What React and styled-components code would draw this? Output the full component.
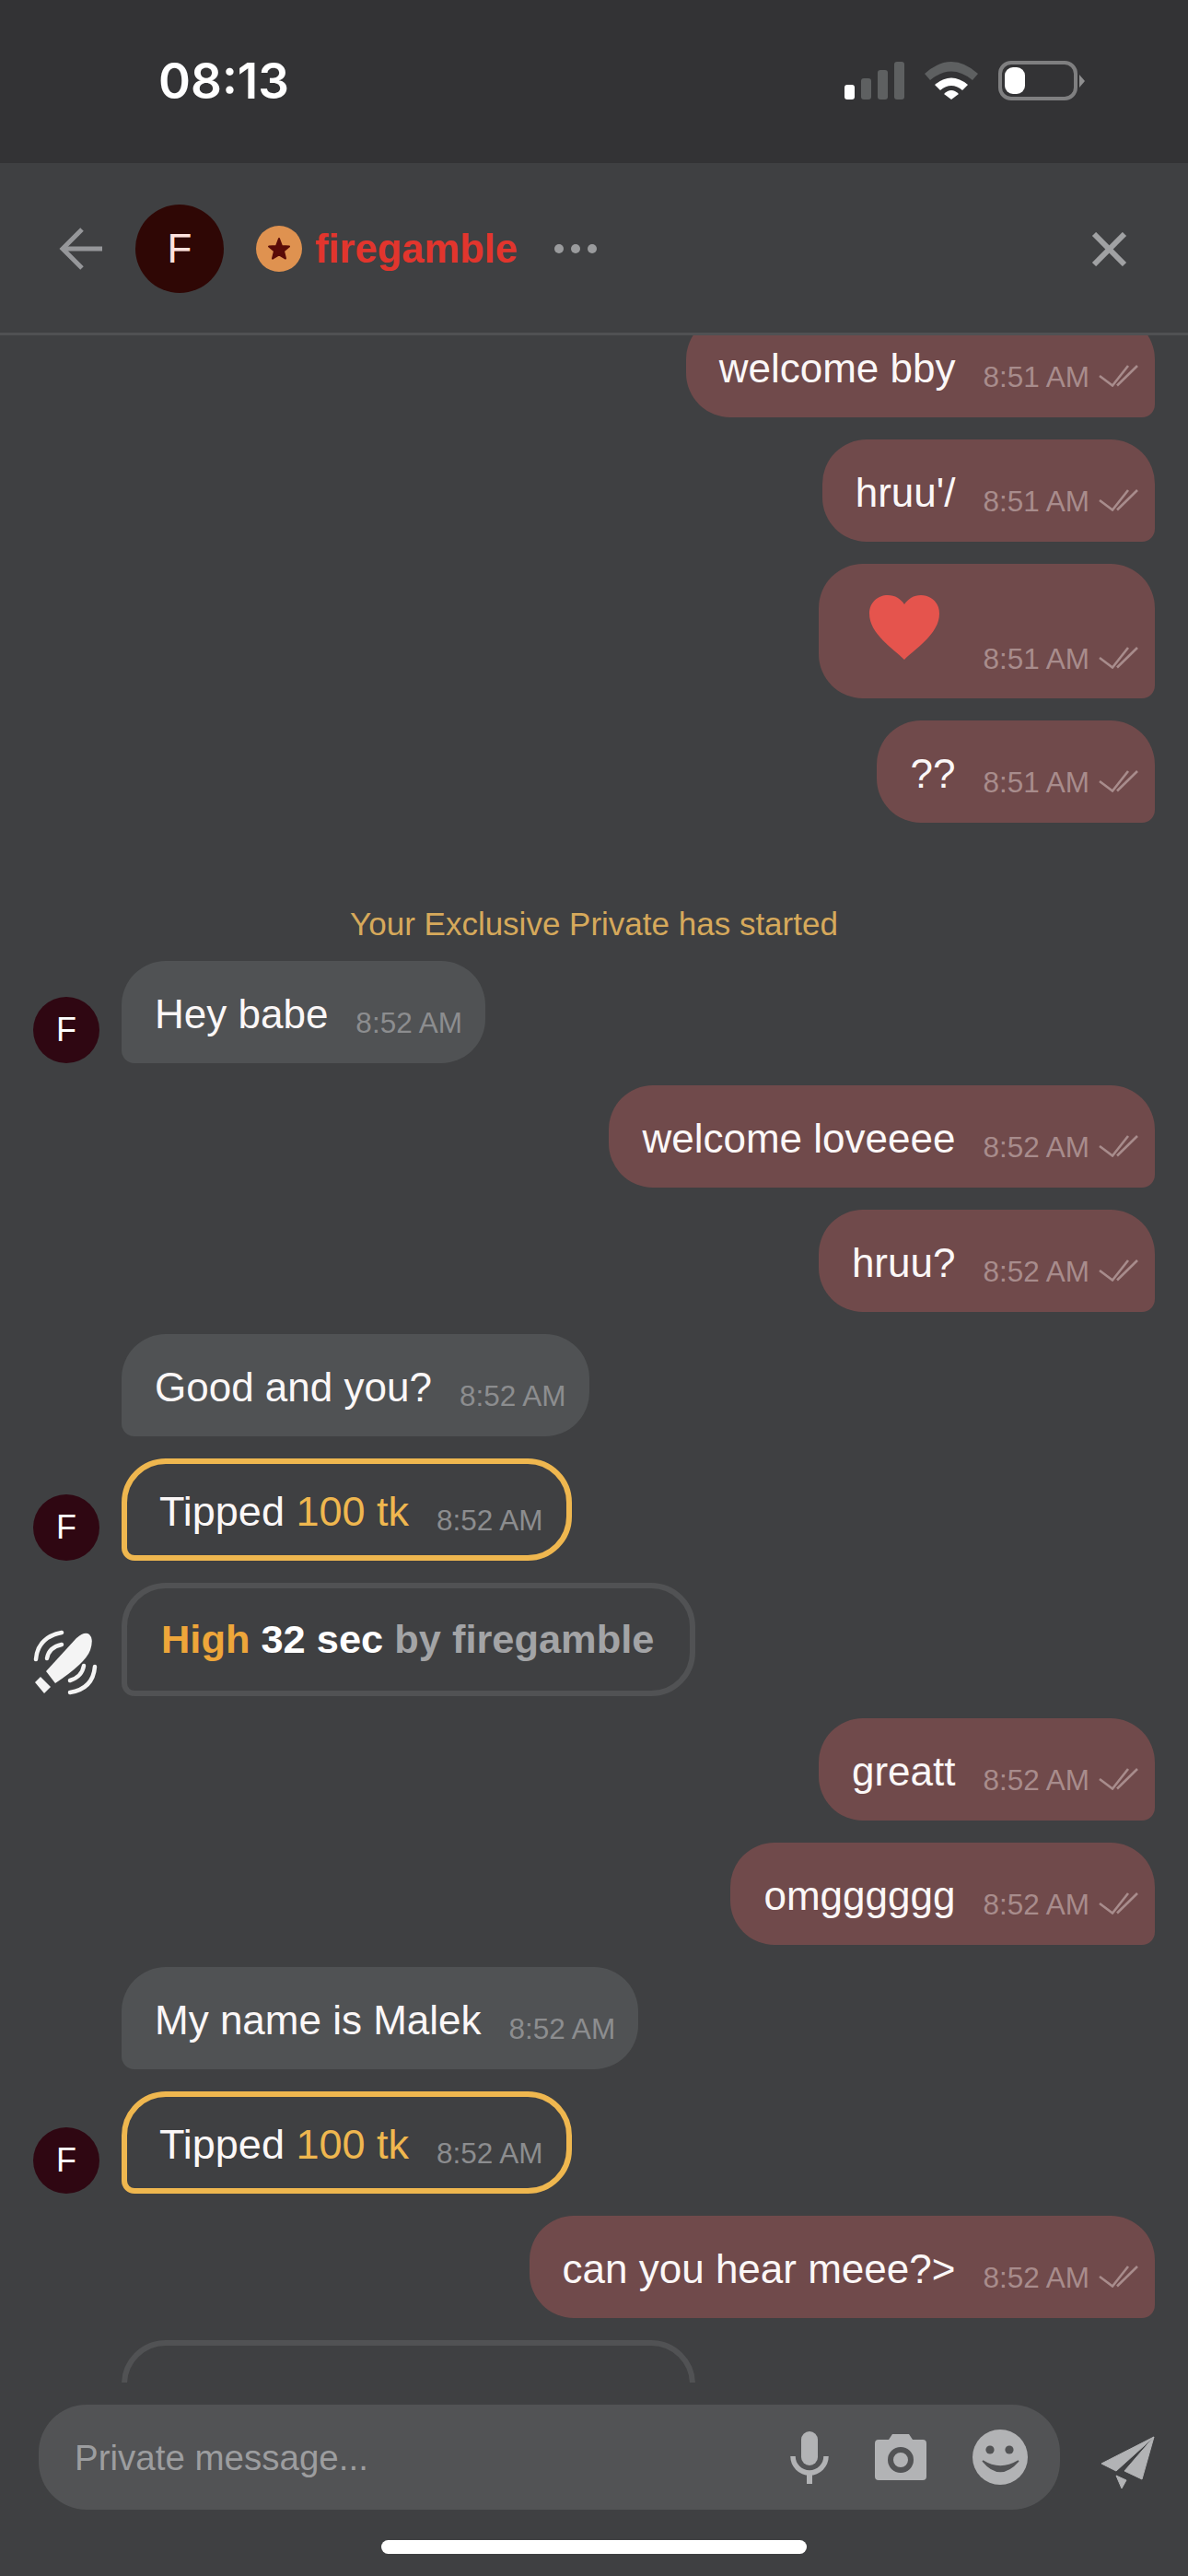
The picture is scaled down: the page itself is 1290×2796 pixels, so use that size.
import styled, { createGlobalStyle } from "styled-components";

const GlobalStyle = createGlobalStyle`
  html, body {
    margin: 0;
    padding: 0;
    background: #3f4042;
  }
  * {
    box-sizing: border-box;
  }
`;

const Page = styled.div`
  width: 1290px;
  height: 2796px;
  display: flex;
  flex-direction: column;
  overflow: hidden;
  background: #3f4042;
  color: #fff;
  font-family: "Liberation Sans", Arial, sans-serif;
`;

const StatusBar = styled.div`
  height: 177px;
  flex: none;
  display: flex;
  align-items: center;
  justify-content: space-between;
  padding: 0 112px 2px 172px;
  background: #333335;
`;
const Clock = styled.div`
  font-family: Inter, sans-serif;
  font-size: 53px;
  font-weight: 600;
`;
const StatusIcons = styled.div`
  display: flex;
  align-items: center;
  gap: 22px;
`;
const Signal = styled.div`
  display: flex;
  align-items: flex-end;
  gap: 7px;
  height: 41px;
`;
const SignalBar = styled.span`
  width: 11px;
  height: ${(p) => p.$h}px;
  border-radius: 3px;
  background: ${(p) => (p.$on ? "#fff" : "#5e6061")};
`;
const Battery = styled.div`
  display: flex;
  align-items: center;
  gap: 2px;
`;
const BatteryShell = styled.div`
  width: 86px;
  height: 43px;
  padding: 3px;
  border: 4px solid #7f7f80;
  border-radius: 14px;
`;
const BatteryFill = styled.div`
  width: 22px;
  height: 100%;
  border-radius: 9px;
  background: #fff;
`;
const BatteryNub = styled.div`
  width: 0;
  height: 0;
  border-top: 7px solid transparent;
  border-bottom: 7px solid transparent;
  border-left: 6px solid #8f8f90;
`;

const Header = styled.div`
  height: 187px;
  flex: none;
  display: flex;
  align-items: center;
  padding: 2px 66px 0 64px;
  border-bottom: 3px solid #505153;
`;
const BackIcon = styled.svg`
  width: 47px;
  height: 46px;
  margin-right: 36px;
`;
const Avatar = styled.div`
  width: ${(p) => p.$size}px;
  height: ${(p) => p.$size}px;
  flex: none;
  display: flex;
  align-items: center;
  justify-content: center;
  border-radius: 50%;
  background: ${(p) => p.$bg};
  color: ${(p) => p.$fg};
  font-size: ${(p) => p.$font}px;
`;
const Badge = styled.div`
  width: 50px;
  height: 50px;
  margin: 0 14px 0 35px;
  display: flex;
  align-items: center;
  justify-content: center;
  border-radius: 50%;
  background: #df9250;
`;
const Name = styled.div`
  color: #e2352d;
  font-size: 43.5px;
  font-weight: 700;
`;
const Dots = styled.div`
  margin-left: 40px;
  display: flex;
  gap: 8px;
`;
const Dot = styled.span`
  width: 10px;
  height: 10px;
  border-radius: 50%;
  background: #9a9b9d;
`;
const CloseIcon = styled.svg`
  width: 39px;
  height: 37px;
  margin-left: auto;
`;

const Messages = styled.div`
  flex: 1;
  min-height: 0;
  overflow: hidden;
`;
const MessageList = styled.div`
  margin-top: -22px;
  padding: 0 36px;
  display: flex;
  flex-direction: column;
  gap: 24px;
`;
const Row = styled.div`
  display: flex;
  align-items: flex-end;
  gap: 24px;
  justify-content: ${(p) => (p.$mine ? "flex-end" : "flex-start")};
`;
const AvatarSlot = styled.div`
  width: 72px;
  height: 72px;
  flex: none;
`;
const Bubble = styled.div`
  height: 111px;
  display: flex;
  align-items: center;
  gap: 30px;
  padding: ${(p) => (p.$mine ? "0 18px 0 36px" : "0 25px 0 36px")};
  border-radius: ${(p) => (p.$mine ? "48px 48px 14px 48px" : "48px 48px 48px 14px")};
  background: ${(p) => (p.$mine ? "#704a4b" : "#505254")};
`;
const HeartBubble = styled(Bubble)`
  height: 146px;
  gap: 47px;
  align-items: flex-start;
  padding: 34px 18px 0 55px;
`;
const TipBubble = styled(Bubble)`
  padding: 0 25px 0 35px;
  border: 6px solid #efb74f;
  background: transparent;
`;
const VibeBubble = styled.div`
  width: 623px;
  height: 123px;
  display: flex;
  align-items: center;
  padding: 0 0 0 37px;
  border: 6px solid #515254;
  border-radius: 48px 48px 48px 14px;
  font-size: 43.4px;
  font-weight: 700;
`;
const Text = styled.span`
  padding-top: 5px;
  font-size: ${(p) => (p.$tip ? "45px" : "44px")};
  white-space: pre;
  color: #fbf7f7;
`;
const Tone = styled.span`
  color: ${(p) => p.$color};
`;
const Meta = styled.div`
  display: flex;
  align-items: center;
  gap: 10px;
  padding-top: ${(p) => (p.$heart ? "51px" : "24px")};
  font-size: 31.5px;
  white-space: nowrap;
  color: ${(p) => (p.$mine ? "#a88c8c" : "#8c8d8f")};
`;
const Ticks = styled.svg`
  width: 43px;
  height: 24px;
  margin-top: -4px;
`;
const Notice = styled.div`
  height: 36px;
  margin-top: 66px;
  padding-top: 2px;
  text-align: center;
  line-height: 36px;
  font-size: 35px;
  color: #d6a95b;
`;

const Composer = styled.div`
  flex: none;
  margin-top: 24px;
  display: flex;
  align-items: center;
  padding: 0 36px 0 42px;
`;
const InputPill = styled.div`
  width: 1109px;
  height: 114px;
  display: flex;
  align-items: center;
  padding: 0 35px 0 39px;
  border-radius: 52px;
  background: #525355;
`;
const Placeholder = styled.div`
  flex: 1;
  padding-top: 2px;
  font-size: 38.5px;
  color: #9c9d9f;
`;
const InputIcons = styled.div`
  display: flex;
  align-items: center;
  gap: 50px;
`;
const SendIcon = styled.svg`
  width: 59px;
  height: 58px;
  margin: 12px 0 0 44px;
`;
const HomeBar = styled.div`
  width: 462px;
  height: 15px;
  flex: none;
  margin: 33px auto 24px;
  border-radius: 8px;
  background: #fff;
`;

const Wifi = () => (
  <svg width="58" height="41" viewBox="0 0 58 41">
    <path d="M0 13 Q29 -13 58 13 L52 20 Q29 1 6 20 Z" fill="#5e6061" />
    <path d="M11 25 Q29 10 47 25 L41 31 Q29 21 17 31 Z" fill="#fff" />
    <path d="M21 35 Q29 27 37 35 L29 41 Z" fill="#fff" />
  </svg>
);

const Star = () => (
  <svg width="26" height="26" viewBox="0 0 26 26">
    <path
      d="M13 2 L16 10 L24 10.6 L18 15.6 L20 23.6 L13 19.4 L6 23.6 L8 15.6 L2 10.6 L10 10 Z"
      fill="#5a0c08"
      stroke="#5a0c08"
      strokeWidth="2"
      strokeLinejoin="round"
    />
  </svg>
);

const Check = () => (
  <Ticks viewBox="0 0 43 24" fill="none" stroke="currentColor" strokeWidth="2.6">
    <path d="M1 12 L15 22.5 L32 1" />
    <path d="M20 22.5 L42 1" />
  </Ticks>
);

const Heart = () => (
  <svg width="76" height="70" viewBox="0 0 76 70">
    <path
      d="M38 70 C26 58 0 42 0 20 C0 8 9 0 20 0 C28 0 34 4 38 10 C42 4 48 0 56 0 C67 0 76 8 76 20 C76 42 50 58 38 70 Z"
      fill="#e5544d"
    />
  </svg>
);

const VibeIcon = () => (
  <svg width="72" height="72" viewBox="0 0 72 72">
    <path d="M14 45 L47 9 Q56 1 61 5 Q66 10 62 22 Q57 36 24 58 Z" fill="#f4f4f4" />
    <path d="M2 57 L8 51 L19 62 L12 69 Z" fill="#f4f4f4" />
    <g fill="none" stroke="#f4f4f4" strokeWidth="4.5" strokeLinecap="round">
      <path d="M3 32 Q5 8 31 3" />
      <path d="M15 31 Q17 19 31 16" />
      <path d="M55 39 Q53 51 40 55" />
      <path d="M67 40 Q65 64 40 68" />
    </g>
  </svg>
);

const Mic = () => (
  <svg width="42" height="57" viewBox="0 0 42 57">
    <rect x="12" y="0" width="18" height="37" rx="9" fill="#b2b3b5" />
    <path d="M3 27 A18 18 0 0 0 39 27" fill="none" stroke="#b2b3b5" strokeWidth="5.5" />
    <rect x="18" y="45" width="6" height="12" fill="#b2b3b5" />
  </svg>
);

const Camera = () => (
  <svg width="56" height="50" viewBox="0 0 56 50">
    <path d="M0 10 Q0 6 4 6 L15 6 L19 0 L37 0 L41 6 L52 6 Q56 6 56 10 L56 46 Q56 50 52 50 L4 50 Q0 50 0 46 Z" fill="#b2b3b5" />
    <circle cx="28" cy="28" r="11" fill="none" stroke="#525355" strokeWidth="6" />
  </svg>
);

const Smile = () => (
  <svg width="60" height="60" viewBox="0 0 60 60">
    <circle cx="30" cy="30" r="30" fill="#b2b3b5" />
    <circle cx="19" cy="22" r="4.6" fill="#525355" />
    <circle cx="40" cy="22" r="4.6" fill="#525355" />
    <path d="M11 34 Q30 57 50 34 Q30 46 11 34 Z" fill="#525355" stroke="#525355" strokeWidth="1.5" />
  </svg>
);

const Tick = ({ time, mine, heart }) => (
  <Meta $mine={mine} $heart={heart}>
    {time}
    {mine && <Check />}
  </Meta>
);

const Sent = ({ text, time }) => (
  <Row $mine>
    <Bubble $mine>
      <Text>{text}</Text>
      <Tick time={time} mine />
    </Bubble>
  </Row>
);

const Received = ({ text, withAvatar }) => (
  <Row>
    <AvatarSlot>
      {withAvatar && (
        <Avatar $size={72} $bg="#2f0712" $fg="#fff" $font={36}>
          F
        </Avatar>
      )}
    </AvatarSlot>
    <Bubble>
      <Text>{text}</Text>
      <Tick time="8:52 AM" />
    </Bubble>
  </Row>
);

const Tip = () => (
  <Row>
    <AvatarSlot>
      <Avatar $size={72} $bg="#2f0712" $fg="#fff" $font={36}>
        F
      </Avatar>
    </AvatarSlot>
    <TipBubble>
      <Text $tip>
        Tipped <Tone $color="#efb74f">100 tk</Tone>
      </Text>
      <Tick time="8:52 AM" />
    </TipBubble>
  </Row>
);

const Vibe = ({ empty }) => (
  <Row>
    <AvatarSlot>{!empty && <VibeIcon />}</AvatarSlot>
    <VibeBubble>
      {!empty && (
        <>
          <Tone $color="#eea63a">High</Tone>&nbsp;
          <Tone $color="#fff">32 sec</Tone>&nbsp;
          <Tone $color="#a3a4a6">by firegamble</Tone>
        </>
      )}
    </VibeBubble>
  </Row>
);

const App = () => {
  return (
    <Page>
      <GlobalStyle />
      <StatusBar>
        <Clock>08:13</Clock>
        <StatusIcons>
          <Signal>
            <SignalBar $h={16} $on />
            <SignalBar $h={23} />
            <SignalBar $h={32} />
            <SignalBar $h={41} />
          </Signal>
          <Wifi />
          <Battery>
            <BatteryShell>
              <BatteryFill />
            </BatteryShell>
            <BatteryNub />
          </Battery>
        </StatusIcons>
      </StatusBar>

      <Header>
        <BackIcon viewBox="0 0 47 46" fill="none" stroke="#96979a" strokeWidth="5">
          <path d="M47 23 L4 23" />
          <path d="M25 2 L4 23 L25 44" />
        </BackIcon>
        <Avatar $size={96} $bg="#2f0705" $fg="#ffe2de" $font={44}>
          F
        </Avatar>
        <Badge>
          <Star />
        </Badge>
        <Name>firegamble</Name>
        <Dots>
          <Dot />
          <Dot />
          <Dot />
        </Dots>
        <CloseIcon viewBox="0 0 39 37" fill="none" stroke="#a0a1a3" strokeWidth="6">
          <path d="M3 2 L36 35" />
          <path d="M36 2 L3 35" />
        </CloseIcon>
      </Header>

      <Messages>
        <MessageList>
          <Sent text="welcome bby" time="8:51 AM" />
          <Sent text="hruu'/" time="8:51 AM" />
          <Row $mine>
            <HeartBubble $mine>
              <Heart />
              <Tick time="8:51 AM" mine heart />
            </HeartBubble>
          </Row>
          <Sent text="??" time="8:51 AM" />
          <Notice>Your Exclusive Private has started</Notice>
          <Received text="Hey babe" withAvatar />
          <Sent text="welcome loveeee" time="8:52 AM" />
          <Sent text="hruu?" time="8:52 AM" />
          <Received text="Good and you?" />
          <Tip />
          <Vibe />
          <Sent text="greatt" time="8:52 AM" />
          <Sent text="omgggggg" time="8:52 AM" />
          <Received text="My name is Malek" />
          <Tip />
          <Sent text="can you hear meee?>" time="8:52 AM" />
          <Vibe empty />
        </MessageList>
      </Messages>

      <Composer>
        <InputPill>
          <Placeholder>Private message...</Placeholder>
          <InputIcons>
            <Mic />
            <Camera />
            <Smile />
          </InputIcons>
        </InputPill>
        <SendIcon viewBox="0 0 59 58" fill="#b2b3b5" stroke="#b2b3b5" strokeWidth="1" strokeLinejoin="round">
          <path d="M58 1 L1 30 L17 38 Z" />
          <path d="M58 1 L26 38 L45 47 Z" />
          <path d="M17 43 L28 48 L23 57 Z" />
        </SendIcon>
      </Composer>
      <HomeBar />
    </Page>
  );
};

export default App;
